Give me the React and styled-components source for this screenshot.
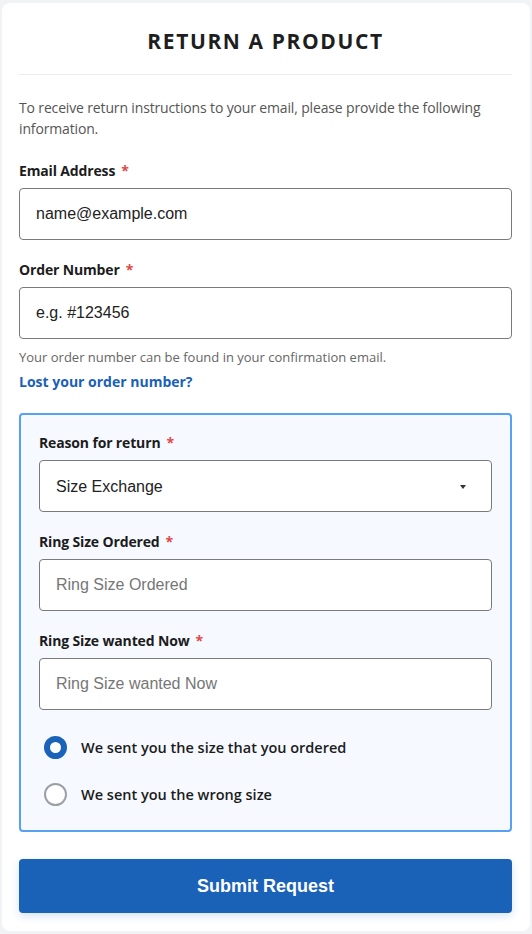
import React from 'react';
import styled, { createGlobalStyle } from 'styled-components';

const GlobalStyle = createGlobalStyle`
  body {
    margin: 0;
    background: #f2f3f5;
    font-family: "Open Sans", "Noto Sans", sans-serif;
  }
  * { box-sizing: border-box; }
`;

const Card = styled.div`
  margin: 3px 2px 4px;
  background: #fff;
  border-radius: 8px;
  padding: 14px 18px 18px 17px;
`;

const Title = styled.h1`
  margin: 0;
  padding: 10px 0 19px;
  text-align: center;
  font-size: 21px;
  font-weight: 700;
  letter-spacing: 1.6px;
  color: #1e1e1e;
  border-bottom: 1px solid #ececec;
`;

const Intro = styled.p`
  margin: 22px 0 22px;
  font-size: 14px;
  line-height: 21px;
  letter-spacing: -0.15px;
  color: #555;
`;

const Field = styled.div`
  margin-bottom: ${p => p.$mb ?? 20}px;
`;

const Label = styled.label`
  display: block;
  font-size: 14px;
  font-weight: 700;
  letter-spacing: -0.15px;
  color: #1c1c1c;
  margin-bottom: 7px;
  line-height: 20px;
`;

const Req = styled.span`
  color: #e04848;
  margin-left: 6px;
`;

const Input = styled.input`
  display: block;
  width: 100%;
  height: 52px;
  border: 1px solid #7a7a7a;
  border-radius: 4px;
  padding: 0 16px;
  font-family: "Liberation Sans", Arial, sans-serif;
  font-size: 16px;
  color: #222;
  background: #fff;
  &::placeholder { color: #767676; }
`;

const SelectWrap = styled.div`
  position: relative;
`;

const Select = styled.select`
  display: block;
  width: 100%;
  height: 52px;
  border: 1px solid #7a7a7a;
  border-radius: 4px;
  padding: 0 16px;
  font-family: "Liberation Sans", Arial, sans-serif;
  font-size: 16px;
  color: #222;
  background: #fff;
  appearance: none;
`;

const Caret = styled.span`
  position: absolute;
  right: 26px;
  top: 25px;
  width: 0;
  height: 0;
  border-left: 3.5px solid transparent;
  border-right: 3.5px solid transparent;
  border-top: 4px solid #333;
  pointer-events: none;
`;

const Help = styled.p`
  margin: 9px 0 6px;
  font-size: 13px;
  color: #666;
`;

const LostLink = styled.a`
  display: block;
  font-size: 14px;
  font-weight: 700;
  color: #1a5fb8;
  text-decoration: none;
  margin-bottom: 22px;
`;

const ReasonBox = styled.div`
  border: 2px solid #56a1f2;
  border-radius: 4px;
  background: #f6f9ff;
  padding: 18px 18px 24px;
`;

const RadioList = styled.div`
  display: flex;
  flex-direction: column;
  gap: 24px;
  margin-top: 26px;
  padding-left: 5px;
`;

const RadioRow = styled.label`
  display: flex;
  align-items: center;
  gap: 14px;
  font-size: 14.5px;
  font-weight: 600;
  color: #1c1c1c;
`;

const RadioDot = styled.span`
  width: 23px;
  height: 23px;
  border-radius: 50%;
  flex: none;
  background: #fff;
  border: ${p => (p.$checked ? '6.5px solid #1a63b8' : '2px solid #9ca0a6')};
`;

const Submit = styled.button`
  display: block;
  width: 100%;
  height: 54px;
  margin-top: 27px;
  border: none;
  border-radius: 4px;
  background: #1a62b7;
  color: #fff;
  font-family: "Liberation Sans", Arial, sans-serif;
  font-size: 18px;
  font-weight: 700;
  box-shadow: 0 3px 8px rgba(26, 98, 183, 0.18);
`;

export default function App() {
  return (
    <>
      <GlobalStyle />
      <Card>
        <Title>RETURN A PRODUCT</Title>
        <Intro>To receive return instructions to your email, please provide the following information.</Intro>

        <Field>
          <Label>Email Address<Req>*</Req></Label>
          <Input defaultValue="name@example.com" />
        </Field>

        <Field $mb={0}>
          <Label>Order Number<Req>*</Req></Label>
          <Input defaultValue="e.g. #123456" />
        </Field>
        <Help>Your order number can be found in your confirmation email.</Help>
        <LostLink href="#">Lost your order number?</LostLink>

        <ReasonBox>
          <Field>
            <Label>Reason for return<Req>*</Req></Label>
            <SelectWrap>
              <Select defaultValue="size">
                <option value="size">Size Exchange</option>
              </Select>
              <Caret />
            </SelectWrap>
          </Field>
          <Field>
            <Label>Ring Size Ordered<Req>*</Req></Label>
            <Input placeholder="Ring Size Ordered" />
          </Field>
          <Field $mb={0}>
            <Label>Ring Size wanted Now<Req>*</Req></Label>
            <Input placeholder="Ring Size wanted Now" />
          </Field>
          <RadioList>
            <RadioRow><RadioDot $checked />We sent you the size that you ordered</RadioRow>
            <RadioRow><RadioDot />We sent you the wrong size</RadioRow>
          </RadioList>
        </ReasonBox>

        <Submit>Submit Request</Submit>
      </Card>
    </>
  );
}
